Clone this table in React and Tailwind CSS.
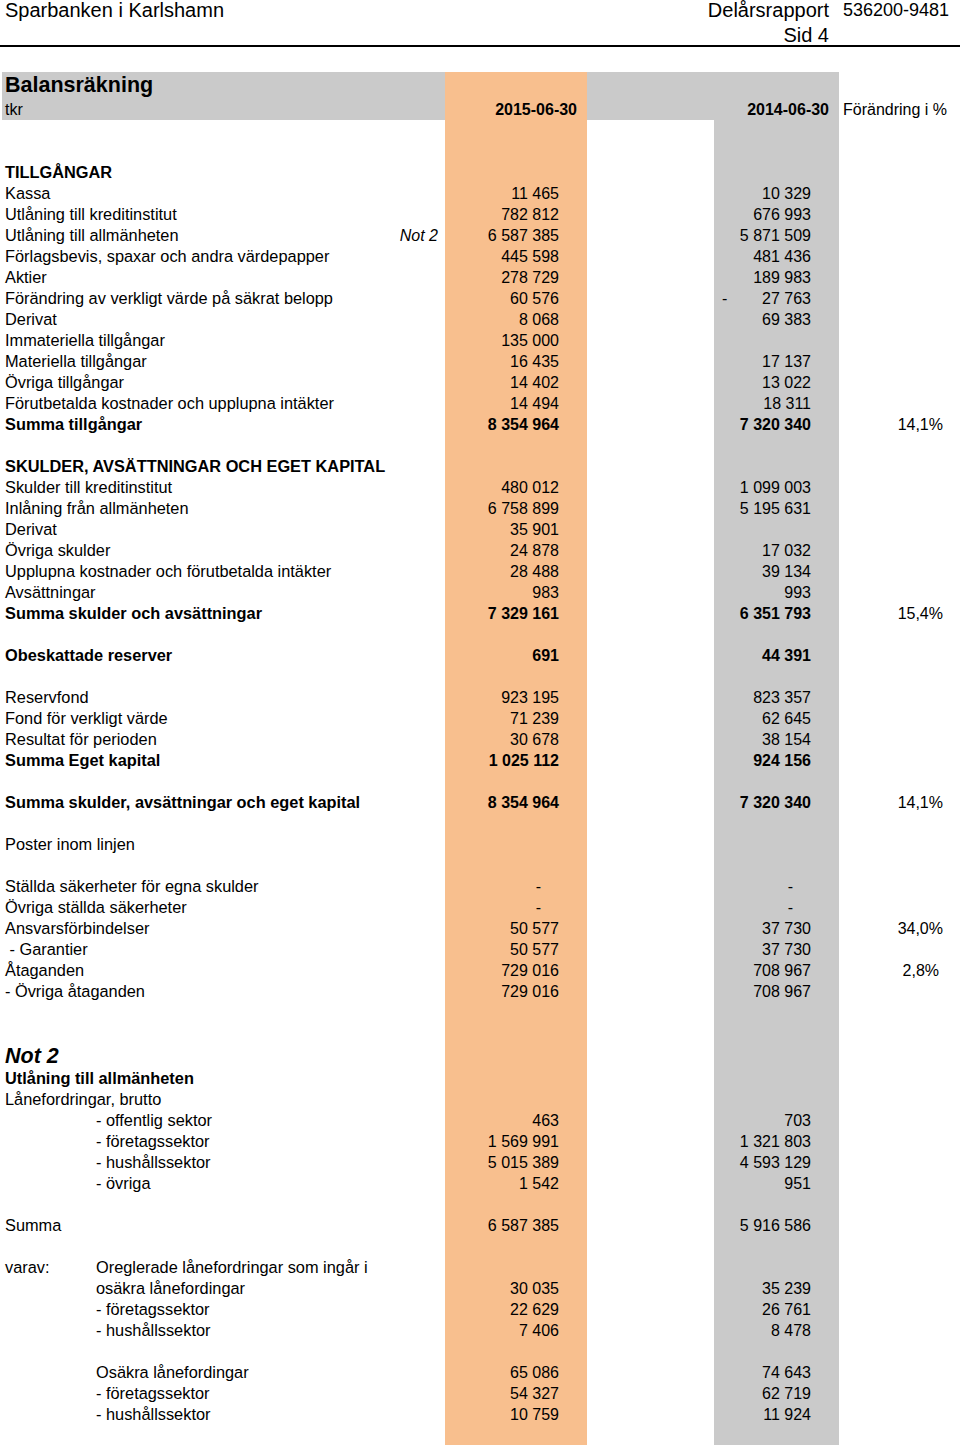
import React from "react";

const rows = [
  { blank: true },
  { blank: true },
  { label: "TILLGÅNGAR", bold: true },
  { label: "Kassa", cur: "11 465", prev: "10 329" },
  { label: "Utlåning till kreditinstitut", cur: "782 812", prev: "676 993" },
  { label: "Utlåning till allmänheten", note: "Not 2", cur: "6 587 385", prev: "5 871 509" },
  { label: "Förlagsbevis, spaxar och andra värdepapper", cur: "445 598", prev: "481 436" },
  { label: "Aktier", cur: "278 729", prev: "189 983" },
  { label: "Förändring av verkligt värde på säkrat belopp", cur: "60 576", prev: "27 763", neg: true },
  { label: "Derivat", cur: "8 068", prev: "69 383" },
  { label: "Immateriella tillgångar", cur: "135 000" },
  { label: "Materiella tillgångar", cur: "16 435", prev: "17 137" },
  { label: "Övriga tillgångar", cur: "14 402", prev: "13 022" },
  { label: "Förutbetalda kostnader och upplupna intäkter", cur: "14 494", prev: "18 311" },
  { label: "Summa tillgångar", cur: "8 354 964", prev: "7 320 340", pct: "14,1%", bold: true },
  { blank: true },
  { label: "SKULDER, AVSÄTTNINGAR OCH EGET KAPITAL", bold: true },
  { label: "Skulder till kreditinstitut", cur: "480 012", prev: "1 099 003" },
  { label: "Inlåning från allmänheten", cur: "6 758 899", prev: "5 195 631" },
  { label: "Derivat", cur: "35 901" },
  { label: "Övriga skulder", cur: "24 878", prev: "17 032" },
  { label: "Upplupna kostnader och förutbetalda intäkter", cur: "28 488", prev: "39 134" },
  { label: "Avsättningar", cur: "983", prev: "993" },
  { label: "Summa skulder och avsättningar", cur: "7 329 161", prev: "6 351 793", pct: "15,4%", bold: true },
  { blank: true },
  { label: "Obeskattade reserver", cur: "691", prev: "44 391", bold: true },
  { blank: true },
  { label: "Reservfond", cur: "923 195", prev: "823 357" },
  { label: "Fond för verkligt värde", cur: "71 239", prev: "62 645" },
  { label: "Resultat för perioden", cur: "30 678", prev: "38 154" },
  { label: "Summa Eget kapital", cur: "1 025 112", prev: "924 156", bold: true },
  { blank: true },
  { label: "Summa skulder, avsättningar och eget kapital", cur: "8 354 964", prev: "7 320 340", pct: "14,1%", bold: true },
  { blank: true },
  { label: "Poster inom linjen" },
  { blank: true },
  { label: "Ställda säkerheter för egna skulder", cur: "-", prev: "-" },
  { label: "Övriga ställda säkerheter", cur: "-", prev: "-" },
  { label: "Ansvarsförbindelser", cur: "50 577", prev: "37 730", pct: "34,0%" },
  { label: "\u00a0- Garantier", cur: "50 577", prev: "37 730" },
  { label: "Åtaganden", cur: "729 016", prev: "708 967", pct: "2,8%", pctShift: true },
  { label: "- Övriga åtaganden", cur: "729 016", prev: "708 967" },
  { blank: true },
  { blank: true },
  { heading: "Not 2" },
  { label: "Utlåning till allmänheten", bold: true, boldLabelOnly: true },
  { label: "Lånefordringar, brutto" },
  { label: "- offentlig sektor", indent: true, cur: "463", prev: "703" },
  { label: "- företagssektor", indent: true, cur: "1 569 991", prev: "1 321 803" },
  { label: "- hushållssektor", indent: true, cur: "5 015 389", prev: "4 593 129" },
  { label: "- övriga", indent: true, cur: "1 542", prev: "951" },
  { blank: true },
  { label: "Summa", cur: "6 587 385", prev: "5 916 586" },
  { blank: true },
  { label: "Oreglerade lånefordringar som ingår i", prefix: "varav:" },
  { label: "osäkra lånefordingar", indent: true, cur: "30 035", prev: "35 239" },
  { label: "- företagssektor", indent: true, cur: "22 629", prev: "26 761" },
  { label: "- hushållssektor", indent: true, cur: "7 406", prev: "8 478" },
  { blank: true },
  { label: "Osäkra lånefordingar", indent: true, cur: "65 086", prev: "74 643" },
  { label: "- företagssektor", indent: true, cur: "54 327", prev: "62 719" },
  { label: "- hushållssektor", indent: true, cur: "10 759", prev: "11 924" },
];

const grid = "grid grid-cols-[443px_142px_127px_125px_1fr]";
const orange = "bg-[#f8bf8e]";
const gray = "bg-[#cacaca]";

function Amount({ value, bold }) {
  if (!value) return null;
  if (value === "-") return <span className="block text-right pr-[46px]">-</span>;
  return <span className={`block text-right pr-[28px] ${bold ? "font-bold" : ""}`}>{value}</span>;
}

function Row({ row }) {
  const { label, note, cur, prev, pct, bold, neg, indent, prefix, heading, pctShift, blank, boldLabelOnly } = row;

  if (heading) {
    return (
      <div className={`${grid} h-[24px] leading-[24px]`}>
        <div className="pl-[3px] text-[21.5px] font-bold italic">{heading}</div>
        <div className={orange}></div>
        <div></div>
        <div className={gray}></div>
        <div></div>
      </div>
    );
  }

  return (
    <div className={`${grid} h-[21px] leading-[21px]`}>
      <div className="flex justify-between pl-[3px] pr-[7px] whitespace-nowrap">
        {blank ? (
          <span></span>
        ) : prefix ? (
          <span className="flex text-[16.35px]">
            <span className="w-[91px]">{prefix}</span>
            <span>{label}</span>
          </span>
        ) : (
          <span className={`text-[16.35px] ${indent ? "pl-[91px]" : ""} ${bold ? "font-bold" : ""}`}>{label}</span>
        )}
        {note && <span className="italic">{note}</span>}
      </div>
      <div className={orange}>
        <Amount value={cur} bold={bold && !boldLabelOnly} />
      </div>
      <div></div>
      <div className={gray}>
        {neg ? (
          <span className="flex justify-between pl-[8px] pr-[28px]">
            <span>-</span>
            <span>{prev}</span>
          </span>
        ) : (
          <Amount value={prev} bold={bold && !boldLabelOnly} />
        )}
      </div>
      <div className={`text-right ${pctShift ? "pr-[21px]" : "pr-[17px]"}`}>{pct}</div>
    </div>
  );
}

export default function App() {
  return (
    <div
      className="w-[960px] min-h-[1445px] bg-white text-black text-[16px]"
      style={{ fontFamily: '"Liberation Sans", Arial, sans-serif' }}
    >
      <header className="flex h-[47px] border-b-2 border-black text-[20px] leading-[20px]">
        <div className="flex-1 pl-[5px]">Sparbanken i Karlshamn</div>
        <div className="flex flex-col items-end pr-[14px]">
          <span>Delårsrapport</span>
          <span className="mt-[5px]">Sid 4</span>
        </div>
        <div className="w-[117px] whitespace-nowrap text-[18px] leading-[20px]">536200-9481</div>
      </header>

      <div className="mt-[25px] ml-[2px]">
        <div className={`${grid} h-[27px] leading-[27px]`}>
          <div className={`${gray} pl-[3px] text-[21.5px] font-bold`}>Balansräkning</div>
          <div className={orange}></div>
          <div className={gray}></div>
          <div className={gray}></div>
          <div></div>
        </div>
        <div className={`${grid} h-[21px] leading-[21px]`}>
          <div className={`${gray} pl-[3px]`}>tkr</div>
          <div className={`${orange} text-right pr-[10px] font-bold`}>2015-06-30</div>
          <div className={gray}></div>
          <div className={`${gray} text-right pr-[10px] font-bold`}>2014-06-30</div>
          <div className="pl-[4px] whitespace-nowrap">Förändring i %</div>
        </div>

        {rows.map((row, i) => (
          <Row key={i} row={row} />
        ))}

        <div className={`${grid} h-[22px]`}>
          <div></div>
          <div className={orange}></div>
          <div></div>
          <div className={gray}></div>
          <div></div>
        </div>
      </div>
    </div>
  );
}
